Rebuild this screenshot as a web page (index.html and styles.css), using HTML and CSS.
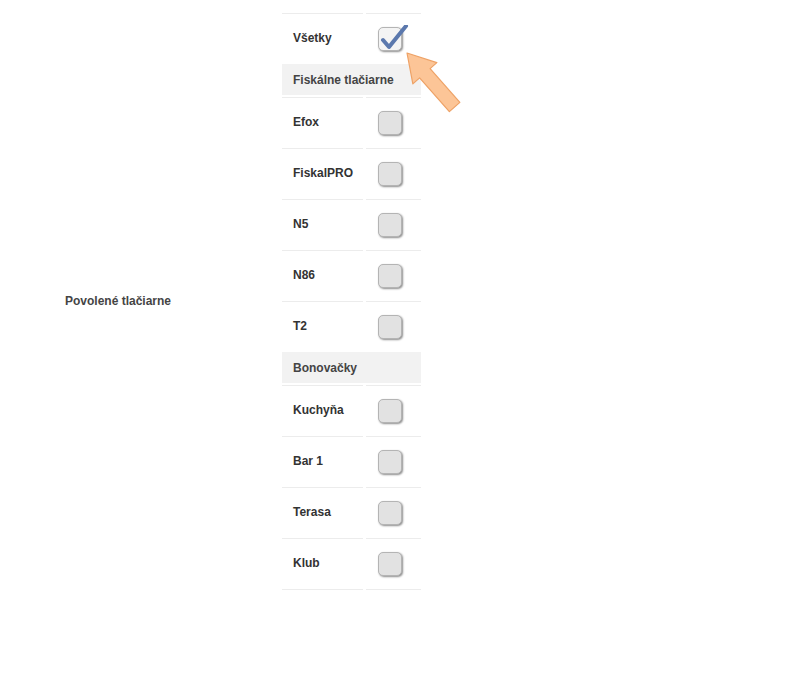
FILE: index.html
```html
<!DOCTYPE html>
<html lang="sk">
<head>
<meta charset="utf-8">
<title>Povolené tlačiarne</title>
<link rel="stylesheet" href="styles.css">
</head>
<body>
<div class="field">
  <div class="field-label">Povolené tlačiarne</div>
  <div class="printers">
    <div class="row">
      <div class="cell name">Všetky</div>
      <div class="cell check">
        <span class="box checked">
          <svg class="tick" width="30" height="28" viewBox="0 0 30 28"><path d="M3 15 L9 22 L26 1" fill="none" stroke="#5b78ad" stroke-width="4" stroke-linecap="round" stroke-linejoin="round"/></svg>
        </span>
      </div>
    </div>
    <div class="group">Fiskálne tlačiarne</div>
    <div class="row"><div class="cell name">Efox</div><div class="cell check"><span class="box"></span></div></div>
    <div class="row"><div class="cell name">FiskalPRO</div><div class="cell check"><span class="box"></span></div></div>
    <div class="row"><div class="cell name">N5</div><div class="cell check"><span class="box"></span></div></div>
    <div class="row"><div class="cell name">N86</div><div class="cell check"><span class="box"></span></div></div>
    <div class="row"><div class="cell name">T2</div><div class="cell check"><span class="box"></span></div></div>
    <div class="group">Bonovačky</div>
    <div class="row"><div class="cell name">Kuchyňa</div><div class="cell check"><span class="box"></span></div></div>
    <div class="row"><div class="cell name">Bar 1</div><div class="cell check"><span class="box"></span></div></div>
    <div class="row"><div class="cell name">Terasa</div><div class="cell check"><span class="box"></span></div></div>
    <div class="row last"><div class="cell name">Klub</div><div class="cell check"><span class="box"></span></div></div>
  </div>
</div>
<svg class="pointer" width="80" height="80" viewBox="0 0 80 80">
  <g transform="translate(12,8) rotate(-41.4)">
    <polygon points="0,0 16,27 7,27 7,72 -7,72 -7,27 -16,27" fill="#fcc597" stroke="#eea266" stroke-width="1.2" stroke-linejoin="round"/>
  </g>
</svg>
</body>
</html>
```
FILE: styles.css
```css
html, body {
  margin: 0;
  padding: 0;
  background: #ffffff;
}
body {
  font-family: "Liberation Sans", Arial, sans-serif;
  font-size: 12px;
  font-weight: bold;
  color: #333333;
  position: relative;
  min-height: 686px;
}
.field {
  display: flex;
  padding-top: 13px;
}
.field-label {
  width: 217px;
  padding-left: 65px;
  padding-bottom: 2px;
  display: flex;
  align-items: center;
  color: #444444;
}
.printers {
  width: 139px;
}
.row {
  display: grid;
  grid-template-columns: 81px 55px;
  column-gap: 3px;
}
.cell {
  box-sizing: border-box;
  height: 51px;
  border-top: 1px solid #ececec;
  display: flex;
  align-items: center;
}
.row.last .cell {
  height: 52px;
  border-bottom: 1px solid #ececec;
}
.name {
  padding-left: 11px;
  padding-bottom: 2px;
}
.check {
  padding-left: 12px;
  padding-bottom: 1px;
}
.group {
  box-sizing: border-box;
  height: 31px;
  margin-bottom: 2px;
  background: #f2f2f2;
  display: flex;
  align-items: center;
  padding-left: 11px;
  color: #444444;
}
.box {
  position: relative;
  display: block;
  width: 22px;
  height: 22px;
  border: 1px solid #b4b4b4;
  border-radius: 5px;
  background: #e2e2e2;
  box-shadow: 1px 1px 2px rgba(0, 0, 0, 0.45);
}
.box.checked {
  background: #f4f4f4;
}
.tick {
  position: absolute;
  left: 1px;
  top: -3px;
}
.pointer {
  position: absolute;
  left: 395px;
  top: 45px;
}
```
